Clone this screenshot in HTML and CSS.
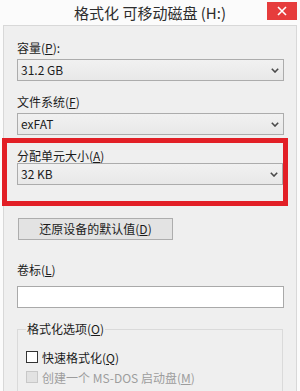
FILE: index.html
```html
<!DOCTYPE html>
<html lang="zh-CN">
<head>
<meta charset="utf-8">
<title>格式化 可移动磁盘 (H:)</title>
<link rel="stylesheet" href="styles.css">
</head>
<body>
<div class="titlebar">
  <span class="title">格式化 可移动磁盘 (H:)</span>
  <div class="close"><svg width="10" height="10" viewBox="0 0 10 10"><path d="M1 1 L9 9 M9 1 L1 9" stroke="#fff" stroke-width="1.6" fill="none"/></svg></div>
</div>
<div class="client">
  <div class="label">容量(<u>P</u>):</div>
  <div class="combo"><span>31.2 GB</span><svg class="chev" width="8" height="5" viewBox="0 0 8 5"><path d="M0.8 0.8 L4 4 L7.2 0.8" stroke="#4a4a4a" stroke-width="1.6" fill="none"/></svg></div>
  <div class="label gap">文件系统(<u>F</u>)</div>
  <div class="combo"><span>exFAT</span><svg class="chev" width="8" height="5" viewBox="0 0 8 5"><path d="M0.8 0.8 L4 4 L7.2 0.8" stroke="#4a4a4a" stroke-width="1.6" fill="none"/></svg></div>
  <div class="highlight">
    <div class="label tight">分配单元大小(<u>A</u>)</div>
    <div class="combo flush"><span>32 KB</span><svg class="chev" width="8" height="5" viewBox="0 0 8 5"><path d="M0.8 0.8 L4 4 L7.2 0.8" stroke="#4a4a4a" stroke-width="1.6" fill="none"/></svg></div>
  </div>
  <div class="button">还原设备的默认值(<u>D</u>)</div>
  <div class="label vol">卷标(<u>L</u>)</div>
  <div class="input"></div>
  <fieldset class="group">
    <legend>格式化选项(<u>O</u>)</legend>
    <div class="check first"><span class="box"></span><span>快速格式化(<u>Q</u>)</span></div>
    <div class="check disabled"><span class="box"></span><span>创建一个 MS-DOS 启动盘(<u>M</u>)</span></div>
  </fieldset>
</div>
</body>
</html>
```
FILE: styles.css
```css
* { box-sizing: border-box; }
html, body { margin: 0; padding: 0; }
body {
  width: 300px;
  height: 391px;
  overflow: hidden;
  background: #fbfbfb;
  font-family: "Noto Sans CJK SC", "Noto Sans", sans-serif;
  font-size: 12px;
  color: #1c1c1c;
}
u { text-decoration: underline; text-underline-offset: 1px; }
.titlebar {
  position: relative;
  height: 25px;
  display: flex;
  align-items: center;
  justify-content: center;
}
.title {
  font-size: 15px;
  line-height: 25px;
  color: #2d2d2d;
}
.close {
  position: absolute;
  right: 3px;
  top: 2px;
  width: 30px;
  height: 18px;
  background: #e63c3c;
  display: flex;
  align-items: center;
  justify-content: center;
}
.client {
  margin: 0 3px;
  height: 366px;
  border: 1px solid #d8d8d8;
  border-bottom: none;
  background: #efefef;
  padding: 14px 12px 0 13px;
}
.label {
  height: 16px;
  line-height: 16px;
}
.label.gap { margin-top: 13px; }
.label.tight { height: 14px; line-height: 14px; }
.label.vol { margin-top: 22px; }
.combo {
  margin-top: 3px;
  height: 22px;
  border: 1px solid #acacac;
  background: linear-gradient(#f1f1f1, #e8e8e8);
  display: flex;
  align-items: center;
  justify-content: space-between;
  padding: 0 4px 0 3px;
  line-height: 20px;
}
.combo.flush { margin-top: 0; }
.chev { display: block; }
.highlight {
  margin: 3px -4px 0 -15px;
  border: 5px solid #e21f26;
  padding: 6px 0 16px 10px;
}
.button {
  margin: 12px 0 0 1px;
  width: 155px;
  height: 22px;
  border: 1px solid #adadad;
  background: #e3e3e3;
  text-align: center;
  line-height: 20px;
}
.input {
  margin-top: 8px;
  height: 22px;
  border: 1px solid #a9a9a9;
  background: #ffffff;
}
.group {
  margin: 13px 1px 0 0;
  padding: 0 8px;
  border: 1px solid #dadada;
  height: 80px;
}
.group legend {
  padding: 0 1px;
  line-height: 16px;
  margin-left: 0;
}
.check {
  height: 20px;
  display: flex;
  align-items: center;
  gap: 4px;
}
.check.first { margin-top: 10px; }
.box {
  width: 12px;
  height: 12px;
  border: 1px solid #333;
  background: #fff;
}
.check.disabled { color: #9d9d9d; }
.check.disabled .box {
  border-color: #c8c8c8;
  background: #e2e2e2;
}
```
